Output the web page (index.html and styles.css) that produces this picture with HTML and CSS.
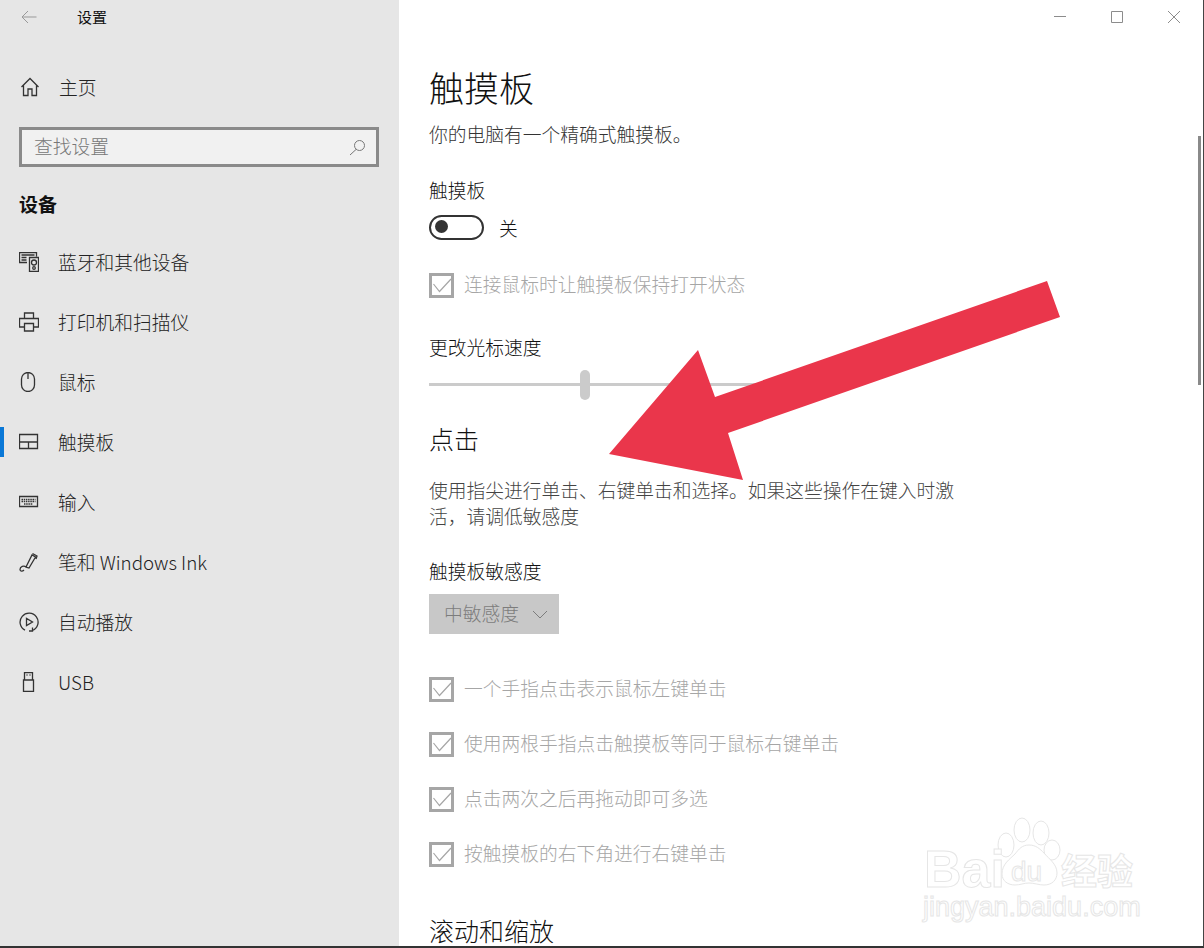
FILE: index.html
```html
<!DOCTYPE html>
<html lang="zh-CN">
<head>
    <meta charset="UTF-8">
    <title>设置</title>
    <link rel="stylesheet" href="styles.css">
</head>
<body>
    <div class="window">
        <div class="sidebar">
            <div class="titlebar">
                <svg class="back" width="16" height="14" viewBox="0 0 16 14"><path d="M15.500 7H1M7 1 1 7l6 6"/></svg>
                <span>设置</span>
            </div>
            <div class="nav-item home">
                <svg class="icon" width="20" height="20" viewBox="0 0 20 20"><path d="M2.500 10 11 1.500l8.500 8.500M4.500 8V18.500H9v-6.500h4v6.500h4.500V8"/></svg>
                <span>主页</span>
            </div>
            <div class="search">
                <span>查找设置</span>
                <svg width="17" height="17" viewBox="0 0 17 17"><circle cx="10.500" cy="6.500" r="5"/><path d="M7 10.500 1 16"/></svg>
            </div>
            <h2 class="group">设备</h2>
            <div class="nav-item">
                <svg class="icon" width="20" height="20" viewBox="0 0 20 20"><path d="M8 10.500H.5V.5h17v4M10.500 5.500h9v14h-9zM2.500 3h13M2.500 5.500h5M2.500 8h5"/><circle cx="15" cy="10.500" r="2.500"/><circle cx="15" cy="16" r="1.300"/></svg>
                <span>蓝牙和其他设备</span>
            </div>
            <div class="nav-item">
                <svg class="icon" width="20" height="20" viewBox="0 0 20 20"><path d="M5.500 6.500V1h9v5.500M5 15H.5V6.500h19V15H15M5.500 11.500h9V19h-9z"/></svg>
                <span>打印机和扫描仪</span>
            </div>
            <div class="nav-item">
                <svg class="icon" width="20" height="20" viewBox="0 0 20 20"><rect x="2.500" y=".5" width="13" height="19" rx="6.500"/><path d="M9 .5v6.500"/></svg>
                <span>鼠标</span>
            </div>
            <div class="nav-item active">
                <svg class="icon" width="20" height="20" viewBox="0 0 20 20"><path d="M.5 2.500h18v14H.5zM.5 10h18M9.500 10v6.500"/></svg>
                <span>触摸板</span>
            </div>
            <div class="nav-item">
                <svg class="icon" width="20" height="20" viewBox="0 0 20 20"><path d="M.5 4.500h18v10H.5z"/><path class="keys" d="M2.500 7.500h14M2.500 9.500h14M5 12h9"/></svg>
                <span>输入</span>
            </div>
            <div class="nav-item">
                <svg class="icon" width="20" height="20" viewBox="0 0 20 20"><path d="m7 15 6-12 3.500 2-6.500 11zM13.500 1.500l4.500 2.500-1 3M7 15c-2-2-6-.5-6 2.500 0 2 2.500 2 4 .5"/></svg>
                <span>笔和 Windows Ink</span>
            </div>
            <div class="nav-item">
                <svg class="icon" width="20" height="20" viewBox="0 0 20 20"><path d="M6 18.200A9 9 0 1 1 13.500 18.500M7.500 6.500v7l6-3.500zM13.500 15.500v3.500h-3.500"/></svg>
                <span>自动播放</span>
            </div>
            <div class="nav-item">
                <svg class="icon" width="20" height="20" viewBox="0 0 20 20"><path d="M4.500 8h10v11.500h-10zM5.500 8V.5h8V8M7.500 3h1M10.500 3h1"/></svg>
                <span>USB</span>
            </div>
        </div>

        <div class="main">
            <div class="caption">
                <svg width="12" height="12" viewBox="0 0 12 12"><path d="M0 5.500h12"/></svg>
                <svg width="12" height="12" viewBox="0 0 12 12"><path d="M.5.500h11v11H.5z"/></svg>
                <svg width="12" height="12" viewBox="0 0 12 12"><path d="m0 0 12 12M12 0 0 12"/></svg>
            </div>

            <h1>触摸板</h1>
            <p class="intro">你的电脑有一个精确式触摸板。</p>

            <div class="label first">触摸板</div>
            <div class="toggle-row">
                <span class="toggle"></span>
                <span>关</span>
            </div>
            <label class="check keep-on"><span class="box"><svg width="19" height="19" viewBox="0 0 19 19"><path d="m1.500 8 6 7.500L19 3"/></svg></span>连接鼠标时让触摸板保持打开状态</label>

            <div class="label speed">更改光标速度</div>
            <div class="slider"><span class="thumb"></span></div>

            <h2>点击</h2>
            <p class="desc">使用指尖进行单击、右键单击和选择。如果这些操作在键入时激活，请调低敏感度</p>

            <div class="label sens">触摸板敏感度</div>
            <div class="select">中敏感度<svg width="16" height="9" viewBox="0 0 16 9"><path d="m1 1 7 7 7-7"/></svg></div>

            <div class="checks">
                <label class="check"><span class="box"><svg width="19" height="19" viewBox="0 0 19 19"><path d="m1.500 8 6 7.500L19 3"/></svg></span>一个手指点击表示鼠标左键单击</label>
                <label class="check"><span class="box"><svg width="19" height="19" viewBox="0 0 19 19"><path d="m1.500 8 6 7.500L19 3"/></svg></span>使用两根手指点击触摸板等同于鼠标右键单击</label>
                <label class="check"><span class="box"><svg width="19" height="19" viewBox="0 0 19 19"><path d="m1.500 8 6 7.500L19 3"/></svg></span>点击两次之后再拖动即可多选</label>
                <label class="check"><span class="box"><svg width="19" height="19" viewBox="0 0 19 19"><path d="m1.500 8 6 7.500L19 3"/></svg></span>按触摸板的右下角进行右键单击</label>
            </div>

            <h2 class="scroll-title">滚动和缩放</h2>

            <div class="scrollbar"></div>
        </div>
    </div>

    <!-- annotation drawn on top of the screenshot -->
    <svg class="arrow" width="1204" height="948" viewBox="0 0 1204 948"><path d="M609 454 698 350 715 397 1047 281 1060 317 728 433 743 480z"/></svg>

    <!-- watermark -->
    <div class="watermark">
        <svg class="paw" width="70" height="75" viewBox="0 0 70 75"><ellipse cx="9" cy="28" rx="8" ry="12"/><ellipse cx="25" cy="13" rx="8" ry="12"/><ellipse cx="44" cy="16" rx="8" ry="12"/><ellipse cx="55" cy="33" rx="8" ry="10"/><path d="M32 28c-7 0-10 4-14 9-5 5-13 10-13 20 0 7 6 11 13 11 5 0 9-2 14-2s10 2 15 2c8 0 13-5 13-12 0-9-8-14-13-20-4-4-8-8-15-8z"/></svg>
        <span class="wm-bai">Bai</span>
        <span class="wm-du">du</span>
        <span class="wm-jy">经验</span>
        <span class="wm-url">jingyan.baidu.com</span>
    </div>
</body>
</html>
```

FILE: styles.css
```css
* {
    box-sizing: border-box;
}
html, body {
    margin: 0;
    height: 100%;
    overflow: hidden;
}
body {
    position: relative;
    font-family: "Noto Sans CJK SC", "Noto Sans", sans-serif;
    font-weight: 300;
    color: #111;
    background: #fff;
}
.window {
    display: flex;
    height: 948px;
    border-bottom: 2px solid #333;
    border-right: 1px solid #444;
}
.sidebar {
    width: 399px;
    background: #e6e6e6;
    flex-shrink: 0;
}
.titlebar {
    display: flex;
    align-items: center;
    height: 34px;
    padding-left: 21px;
    font-size: 15px;
    font-weight: 400;
}
.titlebar span {
    margin-left: 40px;
    margin-bottom: 2px;
}
.back {
    fill: none;
    stroke: #999;
    stroke-width: 1;
}
.nav-item {
    display: flex;
    align-items: center;
    height: 60px;
    padding-left: 19px;
    font-size: 18.750px;
    color: #222;
    position: relative;
}
.nav-item span {
    margin-left: 19px;
    margin-bottom: 2px;
}
.nav-item.home {
    margin-top: 23px;
}
.nav-item.home span {
    margin-left: 20px;
}
.nav-item.active::before {
    content: "";
    position: absolute;
    left: 0;
    top: 15px;
    width: 4px;
    height: 30px;
    background: #0a78d7;
}
.icon {
    fill: none;
    stroke: #333;
    stroke-width: 1.300;
    flex-shrink: 0;
}
.keys {
    stroke-width: 1.500;
    stroke-dasharray: 1.500 .7;
}
.search {
    display: flex;
    align-items: center;
    justify-content: space-between;
    width: 360px;
    height: 40px;
    margin: 10px 0 0 19px;
    padding: 0 10px 0 12px;
    border: 3px solid #8a8a8a;
    background: #f1f1f1;
    font-size: 18.750px;
    color: #777;
}
.search span {
    margin-bottom: 3px;
}
.search svg {
    fill: none;
    stroke: #777;
    stroke-width: 1;
}
.sidebar .group {
    margin: 19px 0 10px 19px;
    font-size: 19px;
    line-height: 36px;
    font-weight: 700;
    color: #111;
}
.main {
    flex: 1;
    position: relative;
    padding: 0 0 0 30px;
    overflow: hidden;
}
.caption {
    position: absolute;
    top: 11px;
    right: 23px;
    display: flex;
    gap: 45px;
}
.caption svg {
    fill: none;
    stroke: #8c8c8c;
    stroke-width: 1;
}
h1 {
    margin: 62px 0 0;
    font-size: 35px;
    line-height: 50px;
    font-weight: 300;
    color: #111;
}
.intro {
    margin: 9px 0 0;
    font-size: 18.750px;
    line-height: 26px;
    color: #333;
}
.label {
    font-size: 18.750px;
    line-height: 26px;
    color: #111;
}
.label.first {
    margin-top: 30px;
}
.toggle-row {
    display: flex;
    align-items: center;
    gap: 15px;
    height: 26px;
    margin-top: 11px;
    font-size: 18.750px;
}
.toggle {
    position: relative;
    width: 55px;
    height: 25px;
    border: 2.500px solid #333;
    border-radius: 13px;
}
.toggle::after {
    content: "";
    position: absolute;
    left: 4px;
    top: 3.500px;
    width: 13px;
    height: 13px;
    border-radius: 50%;
    background: #333;
}
.check {
    display: flex;
    align-items: center;
    height: 26px;
    font-size: 18.750px;
    color: #a6a6a6;
}
.keep-on {
    margin-top: 30px;
}
.box {
    display: block;
    width: 25px;
    height: 25px;
    margin-top: 4px;
    margin-right: 10px;
    border: 3px solid #a6a6a6;
    flex-shrink: 0;
}
.box svg {
    display: block;
    fill: none;
    stroke: #a6a6a6;
    stroke-width: 1.200;
}
.label.speed {
    margin-top: 38px;
}
.slider {
    position: relative;
    width: 340px;
    height: 3px;
    margin-top: 23px;
    background: #cbcbcb;
}
.thumb {
    position: absolute;
    left: 151px;
    top: -13px;
    width: 10px;
    height: 30px;
    border-radius: 5px;
    background: #cbcbcb;
}
.main h2 {
    margin: 0;
    font-size: 25px;
    line-height: 36px;
    font-weight: 300;
    color: #111;
}
.slider + h2 {
    margin-top: 34px;
}
.desc {
    width: 530px;
    margin: 21px 0 0;
    font-size: 18.750px;
    line-height: 26px;
    color: #444;
}
.label.sens {
    margin-top: 29px;
}
.select {
    display: flex;
    align-items: center;
    justify-content: space-between;
    width: 130px;
    height: 40px;
    margin-top: 10px;
    padding: 0 11px 3px 15px;
    background: #c8c8c8;
    font-size: 18.750px;
    color: #7c7c7c;
}
.select svg {
    margin-top: 3px;
    fill: none;
    stroke: #7c7c7c;
    stroke-width: 1;
}
.checks {
    display: flex;
    flex-direction: column;
    gap: 29px;
    margin-top: 40px;
}
.main .scroll-title {
    margin-top: 50px;
    line-height: 30px;
}
.scrollbar {
    position: absolute;
    right: 2px;
    top: 136px;
    width: 3px;
    height: 249px;
    background: #8a8a8a;
}
.arrow {
    position: absolute;
    left: 0;
    top: 0;
    fill: #ea364b;
}
.watermark {
    position: absolute;
    left: 880px;
    top: 780px;
    width: 324px;
    height: 166px;
    color: #fff;
    font-family: "Liberation Sans", sans-serif;
    -webkit-text-stroke: 1px #e6e6e6;
}
.watermark span {
    position: absolute;
}
.paw {
    position: absolute;
    left: 117px;
    top: 37px;
    fill: #fff;
    stroke: #e6e6e6;
    stroke-width: 1;
}
.wm-bai {
    left: 44px;
    top: 70px;
    font-size: 52px;
    line-height: 38px;
    font-weight: 700;
}
.wm-du {
    left: 131px;
    top: 80px;
    font-size: 28px;
    line-height: 24px;
}
.wm-jy {
    left: 181px;
    top: 69px;
    font-size: 36px;
    line-height: 40px;
    font-family: "Noto Sans CJK SC", sans-serif;
    font-weight: 700;
}
.wm-url {
    left: 43px;
    top: 114px;
    font-size: 27px;
    line-height: 27px;
}
```
